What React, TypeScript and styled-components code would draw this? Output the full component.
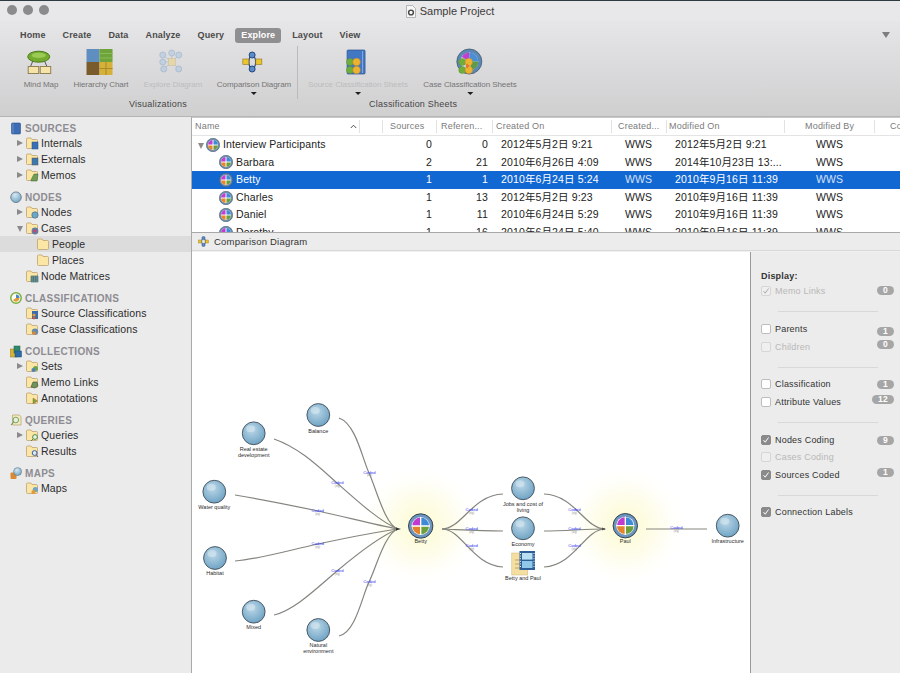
import React from "react";
import styled, { createGlobalStyle } from "styled-components";

const FONT = `"Liberation Sans", "Noto Sans CJK JP", Arial, sans-serif`;

const GlobalStyle = createGlobalStyle`
  html, body {
    margin: 0;
    padding: 0;
    background: #ececec;
    overflow: hidden;
  }
  body {
    font-family: ${FONT};
  }
`;

const Window = styled.div`
  position: relative;
  width: 900px;
  height: 673px;
  overflow: hidden;
  background: #ececec;
  color: #2c2c2c;
`;

/* ---------- title bar ---------- */

const TitleBar = styled.div`
  position: relative;
  height: 21px;
  border-top: 1px solid #2e3a42;
  box-sizing: border-box;
  background: #e8e7e9;
  display: flex;
  align-items: center;
  justify-content: center;
`;

const Lights = styled.div`
  position: absolute;
  left: 7px;
  top: 4px;
  display: flex;
  gap: 6px;
`;

const Light = styled.span`
  width: 10px;
  height: 10px;
  border-radius: 50%;
  background: #8b8a8d;
`;

const TitleText = styled.span`
  font-size: 11px;
  color: #3c3c3c;
  margin-left: 4px;
`;

const TitleRule = styled.div`
  position: absolute;
  left: 8px;
  right: 6px;
  top: 20px;
  height: 1px;
  background: #bdbcbd;
`;

/* ---------- ribbon ---------- */

const Ribbon = styled.div`
  position: relative;
  height: 96px;
  background: linear-gradient(#e6e5e7, #d0cfd0);
  border-bottom: 1px solid #b5b5b5;
  box-sizing: border-box;
`;

const Tabs = styled.div`
  position: absolute;
  left: 14px;
  top: 7px;
  display: flex;
  gap: 5px;
`;

const Tab = styled.div<{ $active?: boolean }>`
  height: 15px;
  line-height: 15px;
  padding: 0 6px;
  border-radius: 3px;
  font-size: 9px;
  font-weight: 700;
  letter-spacing: 0.14px;
  color: ${(p) => (p.$active ? "#fff" : "#4a4a4a")};
  background: ${(p) => (p.$active ? "#8f8e90" : "transparent")};
`;

const Chevron = styled.div`
  position: absolute;
  right: 10px;
  top: 11px;
  width: 0;
  height: 0;
  border-left: 4px solid transparent;
  border-right: 4px solid transparent;
  border-top: 6px solid #7d7d7f;
`;

const Tool = styled.div<{ $x: number }>`
  position: absolute;
  top: 26px;
  left: ${(p) => p.$x}px;
  transform: translateX(-50%);
  display: flex;
  flex-direction: column;
  align-items: center;
  white-space: nowrap;
`;

const ToolLabel = styled.div<{ $off?: boolean }>`
  margin-top: 2px;
  height: 12px;
  line-height: 12px;
  font-size: 8px;
  letter-spacing: -0.07px;
  color: ${(p) => (p.$off ? "#bcbcbc" : "#757575")};
`;

const ToolArrow = styled.div`
  margin-top: 1px;
  width: 0;
  height: 0;
  border-left: 3px solid transparent;
  border-right: 3px solid transparent;
  border-top: 3px solid #1e1e1e;
`;

const GroupLabel = styled.div<{ $x: number }>`
  position: absolute;
  top: 77px;
  left: ${(p) => p.$x}px;
  font-size: 9px;
  letter-spacing: 0.22px;
  line-height: 12px;
  color: #454545;
  white-space: nowrap;
`;

const RibbonDivider = styled.div`
  position: absolute;
  left: 297px;
  top: 25px;
  width: 1px;
  height: 53px;
  background: #bcbbbc;
`;

/* ---------- body layout ---------- */

const Body = styled.div`
  position: absolute;
  left: 0;
  right: 0;
  top: 117px;
  bottom: 0;
  display: flex;
`;

const Sidebar = styled.div`
  width: 192px;
  flex: none;
  box-sizing: border-box;
  padding-top: 5px;
  background: #ebebeb;
  border-right: 1px solid #a9a9a9;
`;

const Main = styled.div`
  flex: 1;
  display: flex;
  flex-direction: column;
  min-width: 0;
  background: #fff;
`;

/* ---------- sidebar ---------- */

const Section = styled.div`
  margin-bottom: 8px;
`;

const SectionTitle = styled.div`
  display: flex;
  align-items: center;
  height: 13px;
  padding-left: 10px;
  gap: 3px;
  font-size: 10px;
  font-weight: 700;
  letter-spacing: 0.3px;
  color: #8e8c92;
`;

const TreeRow = styled.div<{ $depth?: number; $selected?: boolean }>`
  position: relative;
  display: flex;
  align-items: center;
  height: 16px;
  padding-left: ${(p) => (p.$depth ? 37 : 26)}px;
  gap: 3px;
  font-size: 10.5px;
  letter-spacing: 0.1px;
  color: #2c2c2c;
  background: ${(p) => (p.$selected ? "#dcdcdc" : "transparent")};
`;

const Disclosure = styled.span<{ $open?: boolean; $x: number }>`
  position: absolute;
  left: ${(p) => p.$x}px;
  top: 50%;
  width: 0;
  height: 0;
  ${(p) =>
    p.$open
      ? `
    margin-top: -2px;
    border-left: 3.5px solid transparent;
    border-right: 3.5px solid transparent;
    border-top: 6px solid #8a8a8a;
  `
      : `
    margin-top: -3.5px;
    border-top: 3.5px solid transparent;
    border-bottom: 3.5px solid transparent;
    border-left: 6px solid #8a8a8a;
  `}
`;

/* ---------- table ---------- */

const COLUMNS = "190px 54px 56px 119px 55px 118px 90px 1fr";

const TableWrap = styled.div`
  height: 115px;
  overflow: hidden;
  flex: none;
  background: #fff;
`;

const HeaderRow = styled.div`
  display: grid;
  grid-template-columns: ${COLUMNS};
  height: 19px;
  box-sizing: border-box;
  border-top: 1px solid #c9c9c9;
  border-bottom: 1px solid #e4e4e4;
  font-size: 9px;
  letter-spacing: 0.2px;
  color: #7b7b7b;
`;

const HeaderCell = styled.div<{ $pad: number; $noLine?: boolean }>`
  position: relative;
  line-height: 17px;
  padding-left: ${(p) => p.$pad}px;
  white-space: nowrap;
  overflow: hidden;
  &::before {
    content: "";
    display: ${(p) => (p.$noLine ? "none" : "block")};
    position: absolute;
    left: 0;
    top: 2px;
    bottom: 2px;
    width: 1px;
    background: #e2e2e2;
  }
`;

const NameHeader = styled(HeaderCell)`
  &::after {
    content: "";
    position: absolute;
    left: 167px;
    top: 2px;
    bottom: 2px;
    width: 1px;
    background: #e2e2e2;
  }
`;

const SortCaret = styled.svg`
  position: absolute;
  left: 158px;
  top: 6px;
`;

const Row = styled.div<{ $selected?: boolean }>`
  display: grid;
  grid-template-columns: ${COLUMNS};
  height: 17.6px;
  line-height: 17.6px;
  font-size: 10.5px;
  letter-spacing: 0.13px;
  white-space: nowrap;
  color: ${(p) => (p.$selected ? "#fff" : "#222")};
  background: ${(p) => (p.$selected ? "#1268d3" : "transparent")};
`;

const NameCell = styled.div<{ $indent: number }>`
  position: relative;
  display: flex;
  align-items: center;
  gap: 3px;
  padding-left: ${(p) => p.$indent}px;
`;

const NumCell = styled.div<{ $pad: number }>`
  text-align: right;
  padding-right: ${(p) => p.$pad}px;
`;

const TextCell = styled.div<{ $pad: number; $soft?: boolean }>`
  padding-left: ${(p) => p.$pad}px;
  overflow: hidden;
  opacity: ${(p) => (p.$soft ? 0.8 : 1)};
`;

/* ---------- comparison panel ---------- */

const PanelBar = styled.div`
  flex: none;
  height: 19px;
  box-sizing: border-box;
  display: flex;
  align-items: center;
  gap: 5px;
  padding-left: 6px;
  font-size: 9.5px;
  letter-spacing: 0.2px;
  color: #333;
  background: #ececec;
  border-top: 1px solid #a8a8a8;
  border-bottom: 1px solid #d8d8d8;
`;

const PanelBody = styled.div`
  flex: 1;
  display: flex;
  min-height: 0;
  border-top: 1px solid #f1f1f1;
`;

const Canvas = styled.svg`
  display: block;
  width: 558px;
  height: 421px;
  flex: none;
  background: #fff;
`;

const DisplayPanel = styled.div`
  flex: 1;
  box-sizing: border-box;
  padding: 16.5px 0 0 10px;
  background: #ececec;
  border-left: 1px solid #9a9a9a;
`;

const DisplayTitle = styled.div`
  height: 14px;
  line-height: 14px;
  font-size: 9px;
  font-weight: 700;
  letter-spacing: 0.2px;
  color: #333;
`;

const CheckRow = styled.div<{ $off?: boolean }>`
  position: relative;
  display: flex;
  align-items: center;
  height: 17.5px;
  gap: 4px;
  font-size: 9px;
  letter-spacing: 0.2px;
  color: ${(p) => (p.$off ? "#b8b8b8" : "#333")};
`;

const Box = styled.span<{ $checked?: boolean; $off?: boolean }>`
  flex: none;
  width: 10px;
  height: 10px;
  box-sizing: border-box;
  border-radius: 2px;
  display: flex;
  align-items: center;
  justify-content: center;
  border: 1px solid ${(p) => (p.$checked && !p.$off ? "#8a8a8a" : p.$off ? "#d6d6d6" : "#bdbdbd")};
  background: ${(p) => (p.$checked && !p.$off ? "#8a8a8a" : p.$off ? "#efefef" : "#fff")};
`;

const Badge = styled.span<{ $dy: number; $wide?: boolean }>`
  position: absolute;
  right: 6px;
  top: 50%;
  margin-top: ${(p) => p.$dy - 4.5}px;
  width: ${(p) => (p.$wide ? 22 : 17)}px;
  height: 9px;
  line-height: 9px;
  border-radius: 4.5px;
  background: #a6a6a6;
  color: #fff;
  font-size: 8.5px;
  font-weight: 700;
  text-align: center;
`;

const Rule = styled.div`
  width: 100px;
  height: 1px;
  margin: 11.25px 0 8px 17px;
  background: #d9d9d9;
`;

/* ---------- icons ---------- */

const CaseIcon = ({ size = 14 }: { size?: number }) => (
  <svg width={size} height={size} viewBox="0 0 24 24" style={{ flex: "none" }}>
    <circle cx="12" cy="12" r="11.5" fill="#6d8fb0" stroke="#4e5a68" />
    <circle cx="12" cy="12" r="8.5" fill="#fff" />
    <path d="M12 12V3.5A8.5 8.5 0 0 0 3.5 12Z" fill="#c13fd0" />
    <path d="M12 12V3.5A8.5 8.5 0 0 1 20.5 12Z" fill="#3d8ad6" />
    <path d="M12 12H3.5A8.5 8.5 0 0 0 12 20.5Z" fill="#e9862a" />
    <path d="M12 12H20.5A8.5 8.5 0 0 1 12 20.5Z" fill="#6aa03c" />
    <path d="M12 3.5V20.5M3.5 12H20.5" stroke="#fff" strokeWidth="1.6" />
  </svg>
);

const badgeArt: Record<string, React.ReactNode> = {
  internal: <rect x="6" y="5" width="6" height="7" fill="#3a6fb5" stroke="#24507f" strokeWidth=".5" />,
  external: <rect x="6" y="5" width="6" height="7" fill="#3d78b0" stroke="#555" strokeWidth=".5" />,
  memo: <path d="M5 11L8 5H12L11 12H5Z" fill="#6f9f55" stroke="#3f5f35" strokeWidth=".5" />,
  node: <circle cx="9" cy="9" r="3.2" fill="#6ea6c8" stroke="#3f6680" strokeWidth=".6" />,
  caseNode: (
    <g>
      <circle cx="9" cy="9" r="3.4" fill="#5e7fa5" />
      <circle cx="9" cy="9" r="1.8" fill="#c4467a" />
    </g>
  ),
  matrix: (
    <path d="M5 6H12V12H5ZM7.3 6V12M9.7 6V12M5 8H12M5 10H12" fill="#7fa6a8" stroke="#35605f" strokeWidth=".6" />
  ),
  sourceClass: (
    <g>
      <rect x="6" y="4" width="6" height="8" fill="#3b6cb0" />
      <circle cx="8" cy="8" r="1.6" fill="#e59a2e" />
      <circle cx="8" cy="11" r="1.4" fill="#d9572c" />
    </g>
  ),
  caseClass: (
    <g>
      <circle cx="9" cy="8.6" r="3.2" fill="#5f8cb0" />
      <circle cx="8" cy="10" r="1.8" fill="#e0862c" />
    </g>
  ),
  sets: (
    <g>
      <circle cx="9.5" cy="8.5" r="2.5" fill="#6aa548" />
      <circle cx="7.4" cy="10" r="2" fill="#4d82c0" />
    </g>
  ),
  memoLink: <path d="M5 11L7 6H11L12 10L9 12Z" fill="#6f9458" stroke="#3c4f35" strokeWidth=".6" />,
  annotation: <path d="M7 6V12L11.5 9Z" fill="#76a53e" stroke="#b0702c" strokeWidth=".5" />,
  query: (
    <g fill="none" stroke="#4f8a44" strokeWidth="1">
      <circle cx="9" cy="8" r="2.4" fill="#e9f3e4" />
      <path d="M7 10L5 12" />
    </g>
  ),
  result: (
    <g fill="none" stroke="#3b5f9c" strokeWidth="1">
      <circle cx="8.6" cy="8" r="2.4" fill="#dfe9f5" />
      <path d="M10.4 10L12 12" />
    </g>
  ),
  map: (
    <g>
      <circle cx="9.4" cy="7.6" r="2.6" fill="#6ea6c8" />
      <circle cx="7.4" cy="10" r="2" fill="#e49a2e" />
    </g>
  ),
};

const Folder = ({ art }: { art?: string }) => (
  <svg width="12" height="12" viewBox="0 0 12 12" style={{ flex: "none", overflow: "visible" }}>
    <path
      d="M.5 3V10.5A1 1 0 0 0 1.5 11.5H10.5A1 1 0 0 0 11.5 10.5V3.5A1 1 0 0 0 10.5 2.5H6L5 1H1.5A1 1 0 0 0 .5 2Z"
      fill="#fbe6a6"
      stroke="#bfa272"
      strokeWidth=".8"
    />
    {art && badgeArt[art]}
  </svg>
);

const sectionIcons: Record<string, React.ReactNode> = {
  sources: (
    <g>
      <rect x="1.5" y="1" width="9" height="11" rx="1" fill="#3c6cb4" stroke="#2a4f8a" strokeWidth=".6" />
      <path d="M3 1.5V11.5" stroke="#7ba0d8" strokeWidth=".7" />
    </g>
  ),
  nodes: (
    <g>
      <circle cx="6" cy="6.2" r="5.3" fill="url(#sideSphere)" stroke="#55677a" strokeWidth=".7" />
    </g>
  ),
  classifications: (
    <g>
      <circle cx="6" cy="6" r="5.2" fill="#fff" stroke="#78b040" strokeWidth="1.5" />
      <path d="M6 6V2.5A3.5 3.5 0 0 1 9.5 6Z" fill="#4e86c2" />
      <path d="M6 6H9.5A3.5 3.5 0 0 1 3 8Z" fill="#e59a2e" />
    </g>
  ),
  collections: (
    <g>
      <rect x=".5" y="4" width="6.5" height="8" fill="#d9b32e" stroke="#8f7628" strokeWidth=".5" />
      <rect x="4" y="1" width="6" height="7" fill="#2f8a6d" stroke="#1d5b4a" strokeWidth=".5" />
      <rect x="5" y="6" width="6.5" height="6" fill="#2f6aa8" stroke="#1f4a78" strokeWidth=".5" />
    </g>
  ),
  queries: (
    <g fill="none">
      <path d="M2.5 1H9.5L11 3V11H2.5Z" fill="#f4eac2" stroke="#b59f6a" strokeWidth=".7" />
      <circle cx="5.8" cy="6" r="2.8" fill="#e4f0dc" stroke="#6d9a58" strokeWidth=".9" />
      <path d="M3.6 8.2L1 11" stroke="#6d9a58" strokeWidth="1.1" />
    </g>
  ),
  maps: (
    <g>
      <rect x=".5" y="5.5" width="6" height="6.5" rx="1" fill="#db8a34" />
      <circle cx="7.6" cy="4.6" r="4" fill="url(#sideSphere)" stroke="#55677a" strokeWidth=".5" />
    </g>
  ),
};

const SectionIcon = ({ kind }: { kind: string }) => (
  <svg width="12" height="13" viewBox="0 0 12 13" style={{ flex: "none" }}>
    <defs>
      <radialGradient id="sideSphere" cx=".4" cy=".3" r=".8">
        <stop offset="0" stopColor="#d6e8f2" />
        <stop offset="1" stopColor="#6a9fc2" />
      </radialGradient>
    </defs>
    {sectionIcons[kind]}
  </svg>
);

const MindMapIcon = () => (
  <svg width="30" height="30" viewBox="0 0 30 30">
    <path d="M8 12L5 19M18 12L21 19" stroke="#555" strokeWidth="1" />
    <ellipse cx="13" cy="9.7" rx="11" ry="5.5" fill="#74ac2d" stroke="#4b7a1d" />
    <ellipse cx="13" cy="8.4" rx="7" ry="2.6" fill="#9ccb55" />
    <rect x="2.5" y="19.5" width="10.5" height="7" fill="#f6e3a8" stroke="#8f8258" />
    <rect x="14.5" y="19.5" width="10.5" height="7" fill="#f6e3a8" stroke="#8f8258" />
  </svg>
);

const HierarchyIcon = () => (
  <svg width="30" height="30" viewBox="0 0 30 30">
    <rect x="1" y="2" width="13" height="13" fill="#5f8fc0" />
    <rect x="14" y="2" width="13" height="13" fill="#6fa33c" />
    <path d="M14 6.5H27M14 11H27" stroke="#8abc55" />
    <rect x="1" y="15" width="13" height="13" fill="#7a5c2c" />
    <rect x="14" y="15" width="13" height="13" fill="#d6b13a" />
    <path d="M20.5 15V28M14 21.5H27" stroke="#a98a2b" />
  </svg>
);

const ExploreIcon = () => (
  <svg width="30" height="30" viewBox="0 0 30 30" opacity=".5">
    <path d="M14 15L5 15M14 15L14 6M14 15L5 8M14 15L21 8M14 15L6 22M14 15L21 22" stroke="#8fb0d0" />
    {[
      [5, 15],
      [14, 6],
      [5, 8],
      [21, 8],
      [6, 22],
      [21, 22],
    ].map(([x, y]) => (
      <circle key={`${x}-${y}`} cx={x} cy={y} r="3" fill="#a8c6e4" stroke="#6d93b8" strokeWidth=".7" />
    ))}
    <rect x="10.5" y="11.5" width="7" height="7" fill="#f0d47a" stroke="#b69d4e" strokeWidth=".5" />
  </svg>
);

const ComparisonIcon = () => (
  <svg width="30" height="30" viewBox="0 0 30 30">
    <path d="M13.3 8C9 10 9 20 13.3 22M13.3 8C18 10 18 20 13.3 22" fill="none" stroke="#24477f" strokeWidth="1.2" />
    <circle cx="13.3" cy="8" r="3" fill="#5a8cc8" stroke="#24477f" />
    <circle cx="13.3" cy="22" r="3" fill="#5a8cc8" stroke="#24477f" />
    <rect x="4" y="12" width="6" height="5.5" fill="#ecc42e" stroke="#8c7620" strokeWidth=".6" />
    <rect x="17" y="12" width="6" height="5.5" fill="#ecc42e" stroke="#8c7620" strokeWidth=".6" />
  </svg>
);

const Dots = () => (
  <g stroke="#5d8a2a" strokeWidth=".4">
    <circle cx="7" cy="15" r="3.6" fill="#6fae3a" />
    <circle cx="7" cy="23" r="3.6" fill="#6fae3a" />
    <circle cx="13.5" cy="15" r="3.8" fill="#eeb233" stroke="#b57f1f" />
    <circle cx="13.5" cy="23" r="3.8" fill="#eeb233" stroke="#b57f1f" />
  </g>
);

const SourceSheetIcon = () => (
  <svg width="30" height="30" viewBox="0 0 30 30">
    <rect x="4" y="3" width="18" height="24" rx="1" fill="#4277c4" stroke="#2b5594" strokeWidth=".7" />
    <path d="M19.5 4V26" stroke="#86aae0" />
    <Dots />
  </svg>
);

const CaseSheetIcon = () => (
  <svg width="30" height="30" viewBox="0 0 30 30">
    <g transform="translate(1.5 2)">
      <circle cx="12.5" cy="12.5" r="12.5" fill="#5b88b5" stroke="#42586e" strokeWidth=".8" />
      <circle cx="12.5" cy="12.5" r="9" fill="#d8e2ec" />
      <path d="M12.5 12.5V3.5A9 9 0 0 0 5 8Z" fill="#c13fd0" />
      <path d="M12.5 12.5V3.5A9 9 0 0 1 21.5 12.5Z" fill="#4a8fd6" />
      <path d="M12.5 12.5H21.5A9 9 0 0 1 15 21Z" fill="#5f9b48" />
    </g>
    <Dots />
    <path d="M10 19L12 16.6L14 19L12 21.4Z" fill="#e2762c" />
  </svg>
);

/* ---------- diagram ---------- */

const Sphere = ({ x, y }: { x: number; y: number }) => (
  <g>
    <circle cx={x} cy={y} r="11.4" fill="url(#sphere)" stroke="#3f4d58" strokeWidth=".9" />
    <ellipse cx={x - 3} cy={y - 4.5} rx="4.5" ry="3.5" fill="#dbeaf2" opacity=".55" />
  </g>
);

const CaseNode = ({ x, y }: { x: number; y: number }) => (
  <g>
    <circle cx={x} cy={y} r="12.2" fill="#6c96bf" stroke="#37434f" />
    <circle cx={x} cy={y} r="9" fill="#fff" />
    <path d={`M${x} ${y}V${y - 8.4}A8.4 8.4 0 0 0 ${x - 8.4} ${y}Z`} fill="#c23bd0" />
    <path d={`M${x} ${y}V${y - 8.4}A8.4 8.4 0 0 1 ${x + 8.4} ${y}Z`} fill="#3e8ad6" />
    <path d={`M${x} ${y}H${x - 8.4}A8.4 8.4 0 0 0 ${x} ${y + 8.4}Z`} fill="#e5832b" />
    <path d={`M${x} ${y}H${x + 8.4}A8.4 8.4 0 0 1 ${x} ${y + 8.4}Z`} fill="#6d9f3a" />
    <path d={`M${x} ${y - 9}V${y + 9}M${x - 9} ${y}H${x + 9}`} stroke="#fff" strokeWidth="1.3" />
  </g>
);

const NodeText = styled.text`
  font-family: ${FONT};
  font-size: 5.5px;
  fill: #2c2c2c;
  text-anchor: middle;
  dominant-baseline: middle;
`;

const CodedText = styled.text`
  font-family: ${FONT};
  font-size: 4.2px;
  fill: #3133f5;
  text-anchor: middle;
  dominant-baseline: middle;
`;

const CodedSub = styled.text`
  font-family: ${FONT};
  font-size: 2.6px;
  fill: #888;
  text-anchor: middle;
  dominant-baseline: middle;
`;

const links = [
  "M339 418 C356 424 362 458 369 473 S385 525 398 529",
  "M274 439 C300 448 320 468 337 483 S380 522 398 529",
  "M235 495 C265 500 290 505 318 511 S375 525 398 529",
  "M235 561 C260 559 290 550 318 544 S375 532 398 529",
  "M274 615 C295 610 318 587 337 571 S380 536 398 529",
  "M339 636 C356 632 362 596 369 582 S385 533 398 529",
  "M442 529 C462 529 472 495 503 494",
  "M442 529 C465 530 480 531 503 531",
  "M442 529 C462 529 472 565 503 567",
  "M544 494 C575 495 585 529 605 529",
  "M544 531 C565 531 585 529 605 529",
  "M544 567 C575 565 585 529 605 529",
  "M646 529 H707",
];

const codedLabels = [
  [369.5, 472.5],
  [337.3, 483],
  [317.7, 511],
  [317.7, 544],
  [337.3, 570.7],
  [369.5, 581.7],
  [471.7, 510.3],
  [471.7, 529.3],
  [471.7, 546.3],
  [574.3, 510.3],
  [574.3, 529.3],
  [574.3, 546.3],
  [676.3, 527.7],
];

const spheres = [
  [318.3, 415],
  [253.7, 433.3],
  [214.3, 491.7],
  [215, 558],
  [253.7, 611.7],
  [318.3, 630],
  [523, 488.3],
  [523, 528.3],
  [727.7, 525.7],
];

const nodeLabels: [string, number, number][] = [
  ["Balance", 318.3, 431.5],
  ["Real estate", 253.7, 449.5],
  ["development", 253.7, 455.5],
  ["Water quality", 214.3, 507.5],
  ["Habitat", 215, 574],
  ["Mixed", 253.7, 628],
  ["Natural", 318.3, 646],
  ["environment", 318.3, 652],
  ["Betty", 420.7, 541.5],
  ["Jobs and cost of", 523, 504.2],
  ["living", 523, 510.1],
  ["Economy", 523, 544.5],
  ["Betty and Paul", 523, 578.8],
  ["Paul", 625.3, 541.5],
  ["Infrastructure", 727.7, 541.5],
];

const Diagram = () => (
  <Canvas viewBox="192 252 558 421">
    <defs>
      <radialGradient id="sphere" cx=".42" cy=".35" r=".7">
        <stop offset="0" stopColor="#bcd8e8" />
        <stop offset="1" stopColor="#6aa0c2" />
      </radialGradient>
      <radialGradient id="glow">
        <stop offset="0" stopColor="#fdfbd0" />
        <stop offset=".55" stopColor="#fefdee" />
        <stop offset="1" stopColor="#ffffff" stopOpacity="0" />
      </radialGradient>
    </defs>
    <circle cx="420.7" cy="526" r="62" fill="url(#glow)" />
    <circle cx="625.3" cy="526" r="62" fill="url(#glow)" />
    {links.map((d) => (
      <path key={d} d={d} fill="none" stroke="#85857f" strokeWidth="1.2" />
    ))}
    <path d="M396 527.6L401 529L396 530.4Z" fill="#333" />
    <path d="M602 527.6L606 529L602 530.4Z" fill="#555" />
    {codedLabels.map(([x, y]) => (
      <g key={`${x}-${y}`}>
        <CodedText x={x} y={y}>Coded</CodedText>
        <CodedSub x={x} y={y + 3.2}>(x/y)</CodedSub>
      </g>
    ))}
    {spheres.map(([x, y]) => (
      <Sphere key={`${x}-${y}`} x={x} y={y} />
    ))}
    <CaseNode x={420.7} y={526} />
    <CaseNode x={625.3} y={525.7} />
    <g>
      <rect x="511.8" y="553" width="16" height="22" fill="#f4dfa0" stroke="#c9b479" strokeWidth=".5" />
      <path d="M515 560H522M515 564H522M515 568H522" stroke="#8a7b55" strokeWidth=".6" />
      <rect x="519.5" y="551" width="15.5" height="19" fill="#2d5f96" />
      <rect x="522" y="553" width="10.5" height="6.6" fill="#b8dff2" />
      <rect x="522" y="561" width="10.5" height="7" fill="#8fc8e8" />
      <path
        d="M520.4 553V568M534 553V568"
        stroke="#fff"
        strokeWidth="1"
        strokeDasharray="1 1.6"
      />
    </g>
    {nodeLabels.map(([t, x, y]) => (
      <NodeText key={t} x={x} y={y}>{t}</NodeText>
    ))}
  </Canvas>
);

/* ---------- data ---------- */

const tabs = ["Home", "Create", "Data", "Analyze", "Query", "Explore", "Layout", "View"];

type TreeItem = { label: string; art?: string; arrow?: boolean; open?: boolean; depth?: number; selected?: boolean };
const tree: { title: string; icon: string; items: TreeItem[] }[] = [
  {
    title: "SOURCES",
    icon: "sources",
    items: [
      { label: "Internals", art: "internal", arrow: true },
      { label: "Externals", art: "external", arrow: true },
      { label: "Memos", art: "memo", arrow: true },
    ],
  },
  {
    title: "NODES",
    icon: "nodes",
    items: [
      { label: "Nodes", art: "node", arrow: true },
      { label: "Cases", art: "caseNode", arrow: true, open: true },
      { label: "People", depth: 1, selected: true },
      { label: "Places", depth: 1 },
      { label: "Node Matrices", art: "matrix" },
    ],
  },
  {
    title: "CLASSIFICATIONS",
    icon: "classifications",
    items: [
      { label: "Source Classifications", art: "sourceClass" },
      { label: "Case Classifications", art: "caseClass" },
    ],
  },
  {
    title: "COLLECTIONS",
    icon: "collections",
    items: [
      { label: "Sets", art: "sets", arrow: true },
      { label: "Memo Links", art: "memoLink" },
      { label: "Annotations", art: "annotation" },
    ],
  },
  {
    title: "QUERIES",
    icon: "queries",
    items: [
      { label: "Queries", art: "query", arrow: true },
      { label: "Results", art: "result" },
    ],
  },
  { title: "MAPS", icon: "maps", items: [{ label: "Maps", art: "map" }] },
];

const rows = [
  ["Interview Participants", "0", "0", "2012年5月2日 9:21", "WWS", "2012年5月2日 9:21", "WWS"],
  ["Barbara", "2", "21", "2010年6月26日 4:09", "WWS", "2014年10月23日 13:...", "WWS"],
  ["Betty", "1", "1", "2010年6月24日 5:24", "WWS", "2010年9月16日 11:39", "WWS"],
  ["Charles", "1", "13", "2012年5月2日 9:23", "WWS", "2010年9月16日 11:39", "WWS"],
  ["Daniel", "1", "11", "2010年6月24日 5:29", "WWS", "2010年9月16日 11:39", "WWS"],
  ["Dorothy", "1", "16", "2010年6月24日 5:40", "WWS", "2010年9月16日 11:39", "WWS"],
];

const displayGroups: { label: string; checked?: boolean; off?: boolean; badge?: string; dy?: number }[][] = [
  [{ label: "Memo Links", checked: true, off: true, badge: "0", dy: -1 }],
  [
    { label: "Parents", badge: "1", dy: 2 },
    { label: "Children", off: true, badge: "0", dy: -2 },
  ],
  [
    { label: "Classification", badge: "1", dy: 0 },
    { label: "Attribute Values", badge: "12", dy: -2 },
  ],
  [
    { label: "Nodes Coding", checked: true, badge: "9", dy: 1 },
    { label: "Cases Coding", off: true },
    { label: "Sources Coded", checked: true, badge: "1", dy: -2 },
  ],
  [{ label: "Connection Labels", checked: true }],
];

const Check = ({ faded }: { faded?: boolean }) => (
  <svg width="8" height="8" viewBox="0 0 8 8">
    <path d="M1.5 4.2L3.2 6.2L6.5 1.5" fill="none" stroke={faded ? "#a8a8a8" : "#fff"} strokeWidth="1" />
  </svg>
);

export default function App() {
  return (
    <Window>
      <GlobalStyle />
      <TitleBar>
        <Lights>
          <Light />
          <Light />
          <Light />
        </Lights>
        <svg width="10" height="13" viewBox="0 0 10 13">
          <path d="M.5.5H6.5L9.5 3.5V12.5H.5Z" fill="#f6f6f6" stroke="#9c9c9c" strokeWidth=".7" />
          <circle cx="5" cy="7.5" r="2.4" fill="none" stroke="#444" strokeWidth="1.4" />
        </svg>
        <TitleText>Sample Project</TitleText>
        <TitleRule />
      </TitleBar>

      <Ribbon>
        <Tabs>
          {tabs.map((t) => (
            <Tab key={t} $active={t === "Explore"}>{t}</Tab>
          ))}
        </Tabs>
        <Chevron />
        <Tool $x={41}>
          <MindMapIcon />
          <ToolLabel>Mind Map</ToolLabel>
        </Tool>
        <Tool $x={101}>
          <HierarchyIcon />
          <ToolLabel>Hierarchy Chart</ToolLabel>
        </Tool>
        <Tool $x={173}>
          <ExploreIcon />
          <ToolLabel $off>Explore Diagram</ToolLabel>
        </Tool>
        <Tool $x={254}>
          <ComparisonIcon />
          <ToolLabel>Comparison Diagram</ToolLabel>
          <ToolArrow />
        </Tool>
        <RibbonDivider />
        <Tool $x={358}>
          <SourceSheetIcon />
          <ToolLabel $off>Source Classification Sheets</ToolLabel>
          <ToolArrow />
        </Tool>
        <Tool $x={470}>
          <CaseSheetIcon />
          <ToolLabel>Case Classification Sheets</ToolLabel>
          <ToolArrow />
        </Tool>
        <GroupLabel $x={129}>Visualizations</GroupLabel>
        <GroupLabel $x={369}>Classification Sheets</GroupLabel>
      </Ribbon>

      <Body>
        <Sidebar>
          {tree.map((s) => (
            <Section key={s.title}>
              <SectionTitle>
                <SectionIcon kind={s.icon} />
                {s.title}
              </SectionTitle>
              {s.items.map((it) => (
                <TreeRow key={it.label} $depth={it.depth} $selected={it.selected}>
                  {it.arrow && <Disclosure $x={17} $open={it.open} />}
                  <Folder art={it.art} />
                  {it.label}
                </TreeRow>
              ))}
            </Section>
          ))}
        </Sidebar>

        <Main>
          <TableWrap>
            <HeaderRow>
              <NameHeader $pad={3} $noLine>
                Name
                <SortCaret width="7" height="5" viewBox="0 0 7 5">
                  <path d="M.8 4L3.5 1.2L6.2 4" fill="none" stroke="#555" strokeWidth="1" />
                </SortCaret>
              </NameHeader>
              <HeaderCell $pad={8}>Sources</HeaderCell>
              <HeaderCell $pad={5}>Referen...</HeaderCell>
              <HeaderCell $pad={4}>Created On</HeaderCell>
              <HeaderCell $pad={7}>Created...</HeaderCell>
              <HeaderCell $pad={3}>Modified On</HeaderCell>
              <HeaderCell $pad={21}>Modified By</HeaderCell>
              <HeaderCell $pad={16}>Co</HeaderCell>
            </HeaderRow>
            {rows.map((r, i) => (
              <Row key={r[0]} $selected={r[0] === "Betty"}>
                <NameCell $indent={i === 0 ? 14 : 27}>
                  {i === 0 && <Disclosure $x={6} $open />}
                  <CaseIcon />
                  {r[0]}
                </NameCell>
                <NumCell $pad={4}>{r[1]}</NumCell>
                <NumCell $pad={4}>{r[2]}</NumCell>
                <TextCell $pad={9}>{r[3]}</TextCell>
                <TextCell $pad={14} $soft={r[0] === "Betty"}>{r[4]}</TextCell>
                <TextCell $pad={9}>{r[5]}</TextCell>
                <TextCell $pad={32} $soft={r[0] === "Betty"}>{r[6]}</TextCell>
                <div />
              </Row>
            ))}
          </TableWrap>

          <PanelBar>
            <svg width="11" height="11" viewBox="0 0 11 11">
              <path d="M5.5 2C3 3 3 8 5.5 9M5.5 2C8 3 8 8 5.5 9" fill="none" stroke="#24477f" />
              <circle cx="5.5" cy="2" r="1.6" fill="#5a8cc8" stroke="#24477f" strokeWidth=".5" />
              <circle cx="5.5" cy="9" r="1.6" fill="#5a8cc8" stroke="#24477f" strokeWidth=".5" />
              <rect x=".5" y="4" width="3" height="3" fill="#ecc42e" stroke="#8c7620" strokeWidth=".4" />
              <rect x="7.5" y="4" width="3" height="3" fill="#ecc42e" stroke="#8c7620" strokeWidth=".4" />
            </svg>
            Comparison Diagram
          </PanelBar>

          <PanelBody>
            <Diagram />
            <DisplayPanel>
              <DisplayTitle>Display:</DisplayTitle>
              {displayGroups.map((group, g) => (
                <React.Fragment key={group[0].label}>
                  {g > 0 && <Rule />}
                  {group.map((o) => (
                    <CheckRow key={o.label} $off={o.off}>
                      <Box $checked={o.checked} $off={o.off}>
                        {o.checked && <Check faded={o.off} />}
                      </Box>
                      {o.label}
                      {o.badge && (
                        <Badge $dy={o.dy ?? 0} $wide={o.badge.length > 1}>{o.badge}</Badge>
                      )}
                    </CheckRow>
                  ))}
                </React.Fragment>
              ))}
            </DisplayPanel>
          </PanelBody>
        </Main>
      </Body>
    </Window>
  );
}
